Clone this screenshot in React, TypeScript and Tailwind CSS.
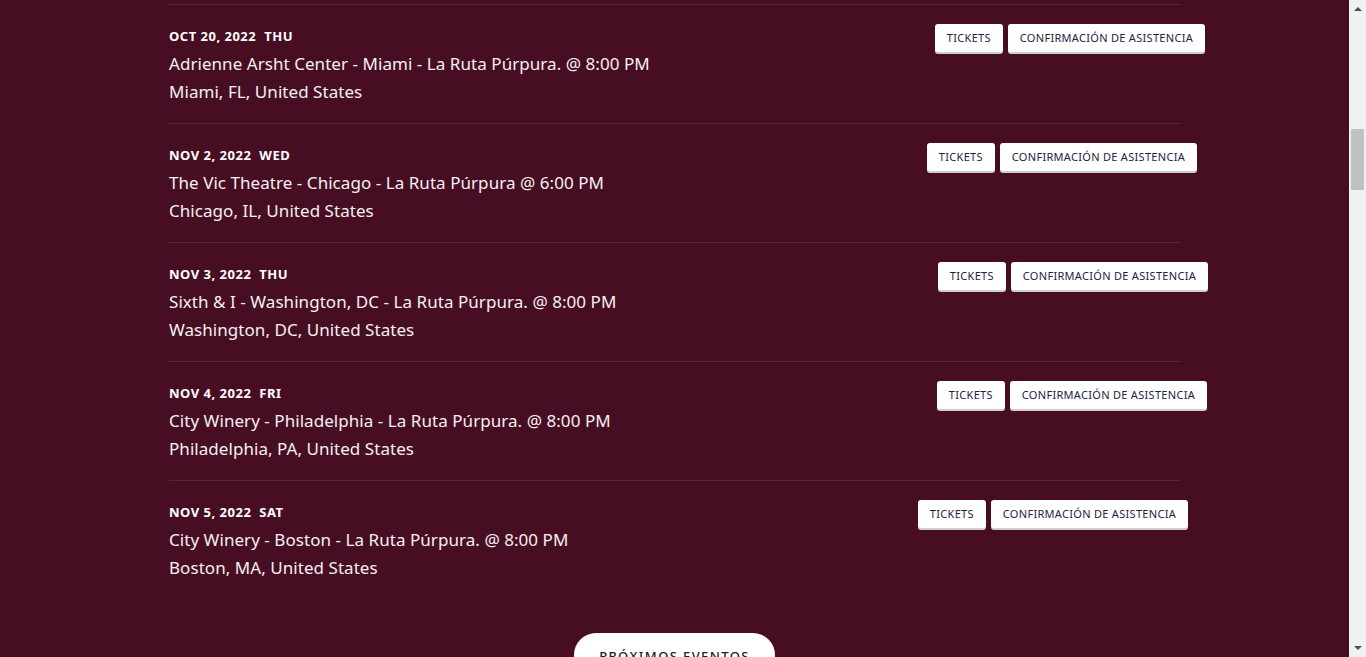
import React from "react";

type Ev = { date: string; day: string; title: string; place: string; mr: string };

const events: Ev[] = [
  { date: "OCT 20, 2022", day: "THU", title: "Adrienne Arsht Center - Miami - La Ruta Púrpura. @ 8:00 PM", place: "Miami, FL, United States", mr: "mr-[-24px]" },
  { date: "NOV 2, 2022", day: "WED", title: "The Vic Theatre - Chicago - La Ruta Púrpura @ 6:00 PM", place: "Chicago, IL, United States", mr: "mr-[-16px]" },
  { date: "NOV 3, 2022", day: "THU", title: "Sixth & I - Washington, DC - La Ruta Púrpura. @ 8:00 PM", place: "Washington, DC, United States", mr: "mr-[-27px]" },
  { date: "NOV 4, 2022", day: "FRI", title: "City Winery - Philadelphia - La Ruta Púrpura. @ 8:00 PM", place: "Philadelphia, PA, United States", mr: "mr-[-26px]" },
  { date: "NOV 5, 2022", day: "SAT", title: "City Winery - Boston - La Ruta Púrpura. @ 8:00 PM", place: "Boston, MA, United States", mr: "mr-[-7px]" },
];

function Btn({ children }: { children: React.ReactNode }) {
  return (
    <button className="h-[28px] px-[12px] bg-white rounded-[3px] shadow-[0_2px_0_#cfcfcf] text-[11px] leading-[28px] tracking-[0.3px] text-[#1c2344] whitespace-nowrap">
      {children}
    </button>
  );
}

function Row({ ev }: { ev: Ev }) {
  return (
    <div className="w-[1012px] h-[119px] border-t border-[#5b2438] flex">
      <div className="flex flex-col pt-[23px]">
        <div className="text-[13px] leading-[16px] font-bold tracking-[0.5px] text-white">
          {ev.date}
          <span className="ml-[8px]">{ev.day}</span>
        </div>
        <div className="mt-[6px] text-[17px] leading-[28px] tracking-[0.05px] text-[#f4f0f1]">{ev.title}</div>
        <div className="text-[17px] leading-[28px] tracking-[0.05px] text-[#f4f0f1]">{ev.place}</div>
      </div>
      <div className={`ml-auto ${ev.mr} pt-[19px] flex gap-[5px] items-start`}>
        <Btn>TICKETS</Btn>
        <Btn>CONFIRMACIÓN DE ASISTENCIA</Btn>
      </div>
    </div>
  );
}

export default function App() {
  return (
    <div className="w-[1366px] h-[657px] overflow-hidden flex" style={{ fontFamily: '"Noto Sans", "Open Sans", sans-serif' }}>
      <div className="flex-1 bg-[#470e23] flex flex-col">
        <div className="pl-[169px] pt-[4px] flex flex-col">
          {events.map((e) => (
            <Row key={e.date} ev={e} />
          ))}
        </div>
        <div className="mt-[34px] flex justify-center">
          <button className="w-[201px] h-[46px] bg-white rounded-[22px] text-[13px] tracking-[1.4px] font-medium text-[#222] pt-[2px]">
            PRÓXIMOS EVENTOS
          </button>
        </div>
      </div>
      <div className="w-[17px] bg-[#f1f1f1] flex flex-col items-center">
        <div className="mt-[7px] w-0 h-0 border-l-[4px] border-r-[4px] border-b-[4px] border-l-transparent border-r-transparent border-b-[#505050]" />
        <div className="mt-[118px] w-[13px] h-[61px] bg-[#c1c1c1]" />
        <div className="mt-auto mb-[7px] w-0 h-0 border-l-[4px] border-r-[4px] border-t-[4px] border-l-transparent border-r-transparent border-t-[#505050]" />
      </div>
    </div>
  );
}
